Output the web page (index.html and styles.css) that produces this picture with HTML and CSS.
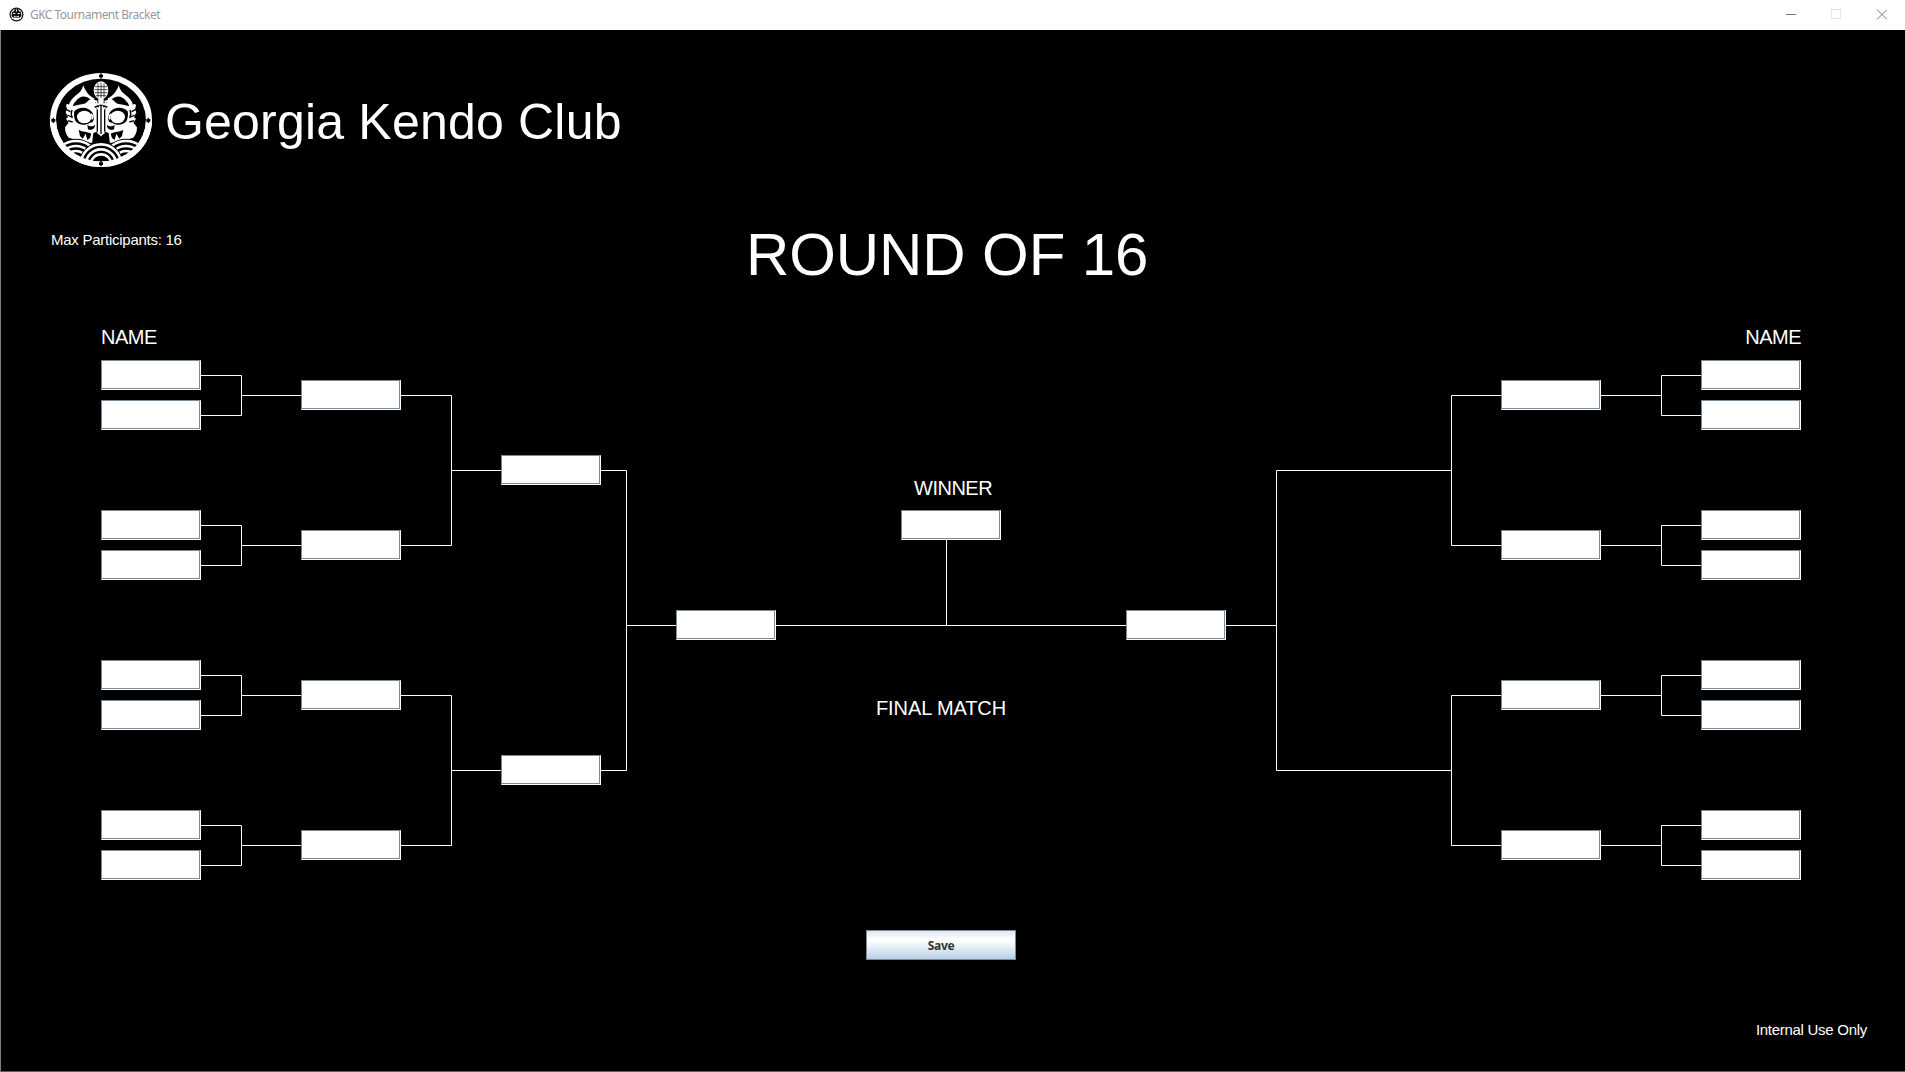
FILE: index.html
```html
<!DOCTYPE html>
<html lang="en">
<head>
<meta charset="utf-8">
<title>GKC Tournament Bracket</title>
<link rel="stylesheet" href="styles.css">
</head>
<body>
<svg class="defs" aria-hidden="true">
  <defs>
    <g id="half">
      <path class="ink" d="M183 108 L164 104 C150 98 136 84 130 64 C126 78 119 87 108 94 C97 103 90 111 87 122 C83 119 80 120 78 124 L81 136 L77 145 L84 160 L78 164 L86 176 L75 190 C75 204 79 213 86 221 L118 230 L150 236 L183 236 Z"/>
      <path class="gap" d="M108 111 C119 94 138 93 151 106 C143 110 142 116 133 119 C124 122 108 122 98 127 Q100 117 108 111Z"/>
      <path class="gap" d="M103 142 C116 126 146 127 158 147 L161 160 C163 172 156 178 149 176 C138 186 116 184 107 172 C102 164 101 152 103 142Z"/>
      <ellipse class="ink" cx="133" cy="159" rx="22" ry="19"/>
      <path class="stroke-ink" d="M152 150 q9 6 4 16"/>
      <path class="gap" d="M142 182 C149 188 160 188 165 182 C166 193 155 201 144 196Z"/>
      <path class="gap" d="M162 128 L177 122 V206 L183 218 V240 H156 L160 207 L170 203 V134Z"/>
      <path class="ink" d="M167 130 H180 V203 L183 216 L171 207 L174 200 V138Z"/>
      <path class="gap" d="M116 197 C125 204 141 202 154 209 L150 222 L142 228 L137 209 L128 224 L120 216Z"/>
      <path class="stroke-gap" d="M80 137 l11 6 M82 153 l12 6 M84 170 l14 4 M96 138 q-5 12 1 24"/>
    </g>
    <clipPath id="inside"><ellipse cx="183" cy="168" rx="137" ry="126"/></clipPath>
    <symbol id="crest" viewBox="0 0 360 330">
      <ellipse class="ink" cx="183" cy="168" rx="153" ry="141"/>
      <ellipse class="gap" cx="183" cy="168" rx="135" ry="124"/>
      <use href="#half"/>
      <use href="#half" transform="matrix(-1 0 0 1 366 0)"/>
      <path class="gap" d="M181 122h4v88h-4z"/>
      <path class="gap" d="M162 104 Q166 124 183 127 Q200 124 204 104Z"/>
      <path class="stroke-ink" d="M156 109 l14 3 q-2 10 8 9 M210 109 l-14 3 q2 10 -8 9"/>
      <ellipse class="gap" cx="183" cy="79" rx="26" ry="31"/>
      <ellipse class="ink" cx="183" cy="79" rx="22" ry="27"/>
      <path class="ink" d="M175 104h16v18h-16z"/>
      <path class="stroke-gap thin" d="M165 68h36M163 77h40M164 86h38M168 95h30M174 58v42M183 56v46M192 58v42"/>
      <g clip-path="url(#inside)">
        <ellipse class="gap" cx="108" cy="282" rx="65" ry="58"/>
        <ellipse class="gap" cx="258" cy="282" rx="65" ry="58"/>
        <g class="wave">
          <ellipse cx="108" cy="282" rx="60" ry="51"/><ellipse cx="108" cy="282" rx="44" ry="36"/><ellipse cx="108" cy="282" rx="28" ry="21"/>
          <ellipse cx="258" cy="282" rx="60" ry="51"/><ellipse cx="258" cy="282" rx="44" ry="36"/><ellipse cx="258" cy="282" rx="28" ry="21"/>
        </g>
        <ellipse class="gap" cx="183" cy="300" rx="66" ry="66"/>
        <g class="wave">
          <ellipse cx="183" cy="300" rx="60" ry="59"/><ellipse cx="183" cy="300" rx="45" ry="44"/><ellipse cx="183" cy="300" rx="30" ry="29"/>
        </g>
      </g>
      <path class="ink" d="M30 168a153 141 0 0 0 306 0h-18a135 124 0 0 1-270 0z"/>
      <path class="gap" d="M181 28h4v4h4v8h-4v4h-4v-4h-4v-8h4zM181 291h4v4h4v8h-4v4h-4v-4h-4v-8h4zM38 161h4v4h4v8h-4v4h-4v-4h-4v-8h4zM323 161h4v4h4v8h-4v4h-4v-4h-4v-8h4z"/>
    </symbol>
  </defs>
</svg>
<div class="window">
  <div class="titlebar">
    <svg class="app-icon" viewBox="0 0 15 15">
      <circle cx="7.5" cy="7.5" r="6.4" fill="#fff" stroke="#111" stroke-width="1.2"/>
      <path d="M3 5l2-1 1-2h3l1 2 2 1 .5 4-2 2h-6l-2-2z" fill="#111"/>
      <path d="M4 6.5h2.4M8.6 6.5H11M5 9l1 .8h3L10 9M7.5 2.5v2M3 11.7q2-1.5 4.500 0 2.500-1.500 4.500 0" fill="none" stroke="#fff" stroke-width=".9"/>
    </svg>
    <span class="window-title">GKC Tournament Bracket</span>
    <svg class="controls" viewBox="0 0 101 11">
      <path d="M0 5.500h10" stroke="#777"/>
      <path d="M45.500.5h9v9h-9z" fill="none" stroke="#e4e4e4"/>
      <path d="M91 .5l10 10M101 .5l-10 10" stroke="#777"/>
    </svg>
  </div>
  <main class="pane">
    <header class="brand">
      <svg class="crest"><use href="#crest"/></svg>
      <h1>Georgia Kendo Club</h1>
    </header>
    <div class="heading">
      <p class="limit">Max Participants: 16</p>
      <h2>ROUND OF 16</h2>
    </div>
    <section class="bracket">
      <svg class="lines" viewBox="0 0 1700 560">
        <g>
          <path id="pair" d="M100 55.500h40.500v40H100M140.500 75.500H200"/>
          <use href="#pair" y="150"/><use href="#pair" y="300"/><use href="#pair" y="450"/>
        </g>
        <path d="M300 75.500h50.500v150H300M350.500 150.500H400M300 375.500h50.500v150H300M350.500 450.500H400"/>
        <path d="M500 150.500h25.500v300H500M525.500 305.500H575M675 305.500h350M845.500 220v85"/>
        <path d="M1125 305.500h50M1350 150.500h-174.500v300H1350M1400 75.500h-49.500v150h49.500M1400 375.500h-49.500v150h49.500"/>
        <g>
          <path id="right-pair" d="M1600 55.500h-39.500v40h39.500M1500 75.500h60"/>
          <use href="#right-pair" y="150"/><use href="#right-pair" y="300"/><use href="#right-pair" y="450"/>
        </g>
      </svg>
      <div class="round first">
        <span class="label">NAME</span>
        <div class="pair"><input class="slot"><input class="slot"></div>
        <div class="pair"><input class="slot"><input class="slot"></div>
        <div class="pair"><input class="slot"><input class="slot"></div>
        <div class="pair"><input class="slot"><input class="slot"></div>
      </div>
      <div class="round second"><input class="slot"><input class="slot"><input class="slot"><input class="slot"></div>
      <div class="round third"><input class="slot"><input class="slot"></div>
      <div class="round fourth"><input class="slot"></div>
      <div class="center">
        <span class="label winner">WINNER</span>
        <input class="slot champion">
        <span class="label final">FINAL MATCH</span>
        <button class="save">Save</button>
      </div>
      <div class="round fourth"><input class="slot"></div>
      <div class="round second"><input class="slot"><input class="slot"><input class="slot"><input class="slot"></div>
      <div class="round first last">
        <span class="label">NAME</span>
        <div class="pair"><input class="slot"><input class="slot"></div>
        <div class="pair"><input class="slot"><input class="slot"></div>
        <div class="pair"><input class="slot"><input class="slot"></div>
        <div class="pair"><input class="slot"><input class="slot"></div>
      </div>
    </section>
    <footer class="notice">Internal Use Only</footer>
  </main>
</div>
</body>
</html>
```
FILE: styles.css
```css
* { box-sizing: border-box; }

body {
  margin: 0;
  background: #000;
  color: #fff;
  font-family: "Liberation Sans", Arial, sans-serif;
}

h1, h2, p { margin: 0; font-weight: 400; }

.defs { display: block; width: 0; height: 0; }

.window {
  display: flex;
  flex-direction: column;
  height: 1072px;
  overflow: hidden;
}

.titlebar {
  display: flex;
  align-items: center;
  height: 30px;
  padding: 0 18px 1px 9px;
  background: #fff;
  color: #999;
  font: 12px "Noto Sans", sans-serif;
}

.app-icon { width: 15px; height: 15px; margin-right: 6px; }
.window-title { letter-spacing: -0.53px; }
.controls { width: 101px; height: 11px; margin-left: auto; }

.pane {
  display: flex;
  flex-direction: column;
  flex: 1;
  border-left: 1px solid #808080;
  border-bottom: 1px solid #606060;
}

.brand {
  display: flex;
  align-items: flex-start;
  height: 200px;
  padding: 34px 0 0 39px;
}

.crest { width: 120px; height: 110px; }
.ink { fill: #fff; }
.gap { fill: #000; }
.stroke-ink { fill: none; stroke: #fff; stroke-width: 5; }
.stroke-gap { fill: none; stroke: #000; stroke-width: 4; }
.thin { stroke-width: 2; }
.wave { fill: none; stroke: #fff; stroke-width: 8; }

.brand h1 {
  margin: 28px 0 0 5px;
  font-size: 50px;
  line-height: 60px;
  letter-spacing: 0.2px;
}

.heading { display: flex; height: 90px; padding-left: 50px; }
.limit { width: 695px; font-size: 15px; line-height: 20px; letter-spacing: -0.26px; }
.heading h2 { font-size: 60px; line-height: 70px; margin-top: -10px; letter-spacing: -0.1px; }

.bracket {
  position: relative;
  display: grid;
  grid-template-columns: 200px 200px 175px 100px 350px 375px 200px 100px;
  height: 680px;
  margin-left: 100px;
}

.lines {
  position: absolute;
  left: 0;
  top: 0;
  width: 1700px;
  height: 560px;
  fill: none;
  stroke: #fff;
}

.round { position: relative; display: flex; flex-direction: column; }
.first { gap: 80px; }
.first .label { height: 40px; margin-bottom: -80px; }
.last .label { text-align: right; }
.pair { display: flex; flex-direction: column; gap: 10px; }
.second { gap: 120px; padding-top: 60px; }
.third { gap: 270px; padding-top: 135px; }
.fourth { padding-top: 290px; }

.label {
  width: 100px;
  font-size: 20px;
  line-height: 34px;
  letter-spacing: -0.5px;
  white-space: nowrap;
}

.slot {
  display: block;
  width: 100px;
  height: 30px;
  padding: 0 4px;
  border: 1px solid;
  border-color: #7a8a99 #fff #fff #7a8a99;
  border-radius: 0;
  background: #fff;
  box-shadow: inset -1px -1px 0 #7a8a99;
}

.center {
  position: relative;
  display: flex;
  flex-direction: column;
  align-items: flex-start;
  padding-top: 151px;
}

.winner { height: 39px; margin-left: 138px; }
.champion { margin-left: 125px; }
.final { margin: 151px 0 0 100px; letter-spacing: -0.1px; }

.save {
  width: 150px;
  height: 30px;
  margin: 205px 0 0 90px;
  padding: 0;
  border: 1px solid #7a8a99;
  background: linear-gradient(#dde8f3 0%, #fff 30%, #fff 35%, #b8cfe5 100%);
  color: #333;
  font: bold 12px "Noto Sans", sans-serif;
  letter-spacing: -0.3px;
}

.notice {
  padding-right: 38px;
  font-size: 15px;
  line-height: 20px;
  letter-spacing: -0.28px;
  margin-top: 20px;
  text-align: right;
}
```
